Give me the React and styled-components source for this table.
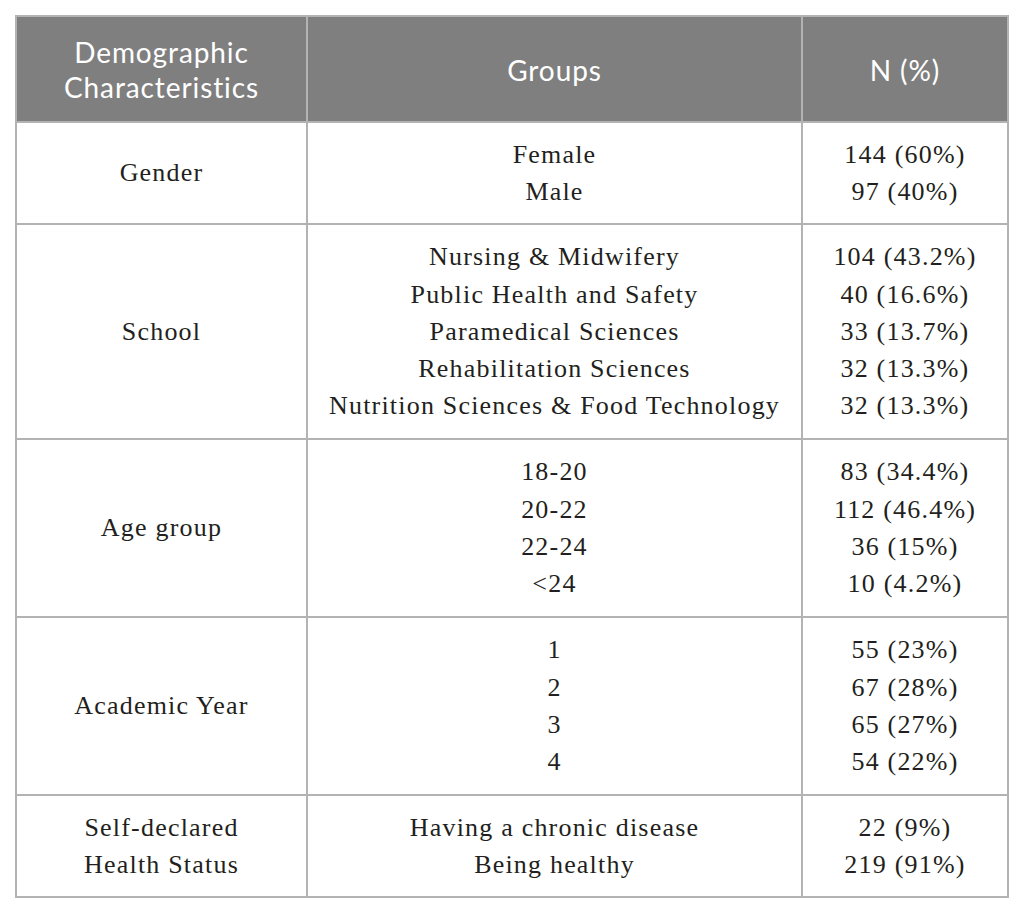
import React from "react";
import styled, { createGlobalStyle } from "styled-components";

const Global = createGlobalStyle`
  html, body { margin: 0; padding: 0; background: #ffffff; }
  body { width: 1025px; height: 914px; overflow: hidden; }
`;

const Page = styled.div`
  padding: 15px 0 0 15px;
`;

const Grid = styled.div`
  display: grid;
  width: 994px;
  box-sizing: border-box;
  grid-template-columns: 289px 493px 204px;
  grid-template-rows: 104px 100px 213px 176px 176px 100px;
  gap: 2px;
  padding: 2px;
  background: #b3b3b3;
`;

const HeadCell = styled.div`
  background: #7f7f7f;
  color: #ffffff;
  font-family: "Lato", "Open Sans", sans-serif;
  font-size: 28px;
  letter-spacing: 0.9px;
  line-height: 35px;
  display: flex;
  align-items: center;
  justify-content: center;
  text-align: center;
  padding-top: 2px;
`;

const Cell = styled.div`
  background: #ffffff;
  color: #231f20;
  font-family: "Liberation Serif", "Times New Roman", serif;
  font-size: 26px;
  letter-spacing: 1.2px;
  line-height: 37.3px;
  display: flex;
  flex-direction: column;
  align-items: center;
  justify-content: center;
  text-align: center;
`;

const Line = styled.div`
  white-space: nowrap;
`;

const rows = [
  { label: ["Gender"], groups: ["Female", "Male"], n: ["144 (60%)", "97 (40%)"] },
  {
    label: ["School"],
    groups: [
      "Nursing & Midwifery",
      "Public Health and Safety",
      "Paramedical Sciences",
      "Rehabilitation Sciences",
      "Nutrition Sciences & Food Technology",
    ],
    n: ["104 (43.2%)", "40 (16.6%)", "33 (13.7%)", "32 (13.3%)", "32 (13.3%)"],
  },
  {
    label: ["Age group"],
    groups: ["18-20", "20-22", "22-24", "<24"],
    n: ["83 (34.4%)", "112 (46.4%)", "36 (15%)", "10 (4.2%)"],
  },
  {
    label: ["Academic Year"],
    groups: ["1", "2", "3", "4"],
    n: ["55 (23%)", "67 (28%)", "65 (27%)", "54 (22%)"],
  },
  {
    label: ["Self-declared", "Health Status"],
    groups: ["Having a chronic disease", "Being healthy"],
    n: ["22 (9%)", "219 (91%)"],
  },
];

const Lines = ({ items }) => items.map((t, i) => <Line key={i}>{t}</Line>);

export default function App() {
  return (
    <>
      <Global />
      <Page>
        <Grid>
          <HeadCell>
            Demographic
            <br />
            Characteristics
          </HeadCell>
          <HeadCell>Groups</HeadCell>
          <HeadCell>N (%)</HeadCell>
          {rows.map((r, i) => (
            <React.Fragment key={i}>
              <Cell><Lines items={r.label} /></Cell>
              <Cell><Lines items={r.groups} /></Cell>
              <Cell><Lines items={r.n} /></Cell>
            </React.Fragment>
          ))}
        </Grid>
      </Page>
    </>
  );
}
